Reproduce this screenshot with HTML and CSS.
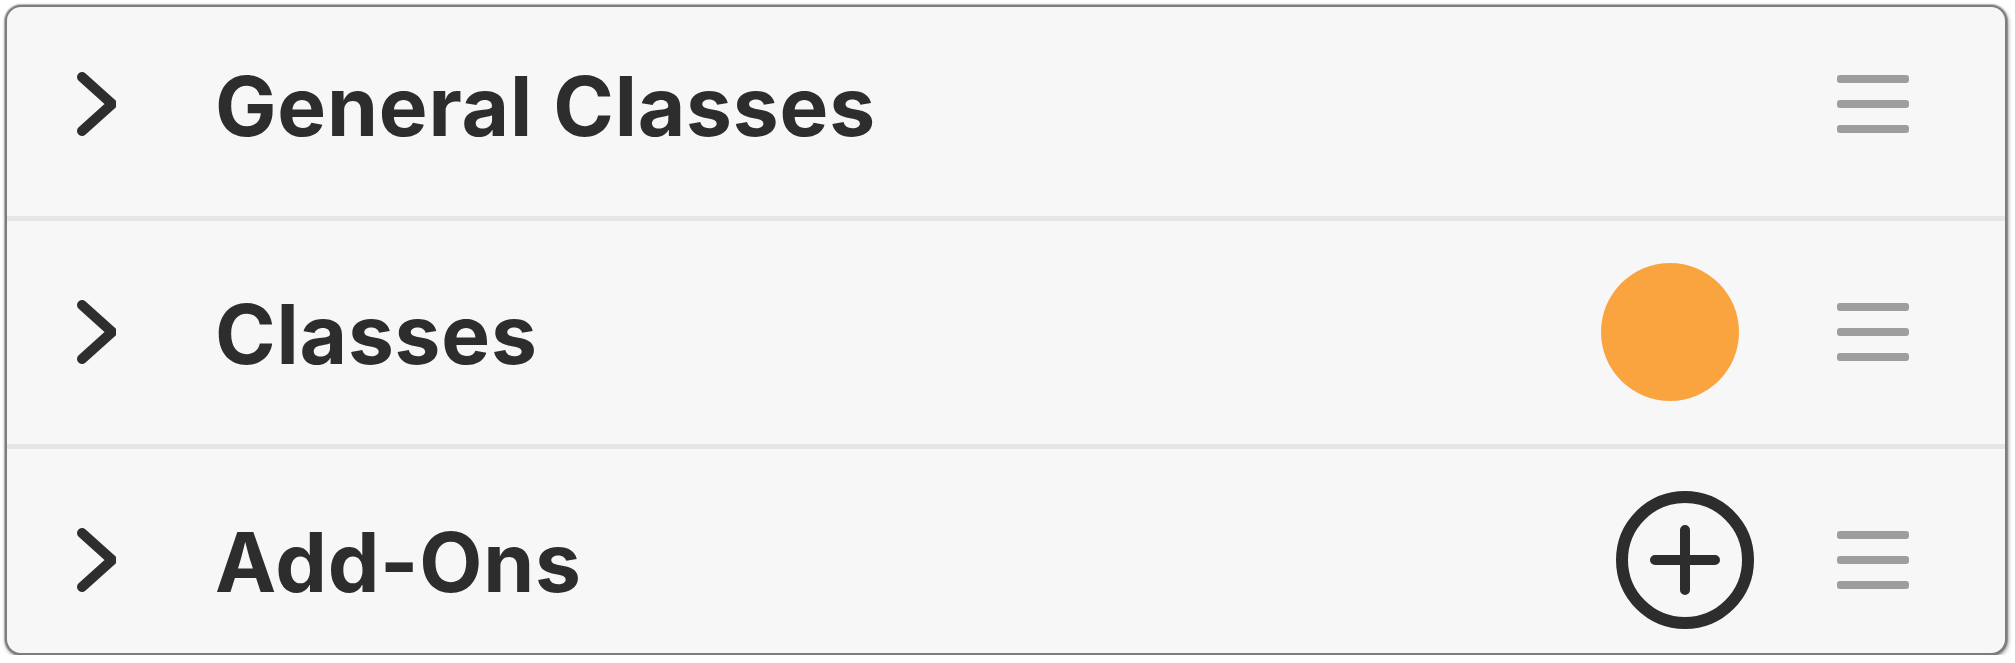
FILE: index.html
```html
<!DOCTYPE html>
<html lang="en">
<head>
<meta charset="utf-8">
<title>Categories</title>
<link rel="stylesheet" href="styles.css">
</head>
<body>
<ul class="card">
  <li class="row">
    <svg class="chevron" viewBox="0 0 40 64" width="40" height="64" aria-hidden="true">
      <polyline points="6,5 36,32 6,59" />
    </svg>
    <span class="title">General Classes</span>
    <svg class="handle" viewBox="0 0 72 58" width="72" height="58" aria-hidden="true">
      <rect x="0" y="0" width="72" height="8" rx="3" />
      <rect x="0" y="25" width="72" height="8" rx="3" />
      <rect x="0" y="50" width="72" height="8" rx="3" />
    </svg>
  </li>
  <li class="row">
    <svg class="chevron" viewBox="0 0 40 64" width="40" height="64" aria-hidden="true">
      <polyline points="6,5 36,32 6,59" />
    </svg>
    <span class="title">Classes</span>
    <span class="dot"></span>
    <svg class="handle" viewBox="0 0 72 58" width="72" height="58" aria-hidden="true">
      <rect x="0" y="0" width="72" height="8" rx="3" />
      <rect x="0" y="25" width="72" height="8" rx="3" />
      <rect x="0" y="50" width="72" height="8" rx="3" />
    </svg>
  </li>
  <li class="row">
    <svg class="chevron" viewBox="0 0 40 64" width="40" height="64" aria-hidden="true">
      <polyline points="6,5 36,32 6,59" />
    </svg>
    <span class="title">Add-Ons</span>
    <svg class="add" viewBox="0 0 138 138" width="138" height="138" aria-hidden="true">
      <circle cx="69" cy="69" r="63" />
      <path d="M69 39 V99 M39 69 H99" />
    </svg>
    <svg class="handle" viewBox="0 0 72 58" width="72" height="58" aria-hidden="true">
      <rect x="0" y="0" width="72" height="8" rx="3" />
      <rect x="0" y="25" width="72" height="8" rx="3" />
      <rect x="0" y="50" width="72" height="8" rx="3" />
    </svg>
  </li>
</ul>
</body>
</html>
```
FILE: styles.css
```css
html, body {
  margin: 0;
  background: #ffffff;
}

body {
  padding: 5px 8px 0 5px;
  font-family: "Inter", "Liberation Sans", sans-serif;
}

.card {
  list-style: none;
  margin: 0;
  padding: 0;
  background: #f7f7f7;
  border: 2px solid #7d7d7d;
  border-radius: 16px;
  box-shadow: 0 0 1px 1px rgba(0, 0, 0, 0.25), 1px 2px 4px rgba(0, 0, 0, 0.45);
  overflow: hidden;
}

.row {
  display: flex;
  align-items: center;
  height: 140px;
  padding: 41px 96px 42px 69px;
}

.row + .row {
  border-top: 5px solid #e6e6e6;
}

.row:first-child {
  padding-top: 27px;
}

.row:last-child {
  padding-bottom: 23px;
}

.chevron {
  flex: none;
  fill: none;
  stroke: #2e2e2e;
  stroke-width: 10;
  stroke-linecap: round;
  stroke-linejoin: miter;
}

.title {
  flex: 1;
  margin-left: 99px;
  padding-top: 6px;
  font-size: 82px;
  font-weight: 700;
  letter-spacing: 0.8px;
  line-height: 1;
  color: #2d2d2d;
}

.dot {
  flex: none;
  width: 138px;
  height: 138px;
  margin-right: 98px;
  border-radius: 50%;
  background: #f9a43f;
}

.add {
  flex: none;
  margin-right: 83px;
  fill: none;
  stroke: #2d2d2d;
}

.add circle {
  stroke-width: 12;
}

.add path {
  stroke-width: 10;
  stroke-linecap: round;
}

.handle {
  flex: none;
  fill: #9e9e9e;
}
```
